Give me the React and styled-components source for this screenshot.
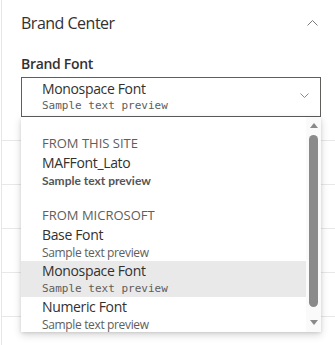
import React from "react";
import styled, { createGlobalStyle } from "styled-components";

const Global = createGlobalStyle`
  html, body { margin: 0; padding: 0; background: #ffffff; }
  body { font-family: "Segoe UI", "Open Sans", "Noto Sans", sans-serif; color: #323130; }
`;

const Panel = styled.div`
  position: relative;
  width: 334px;
  height: 345px;
  margin-left: 1px;
  border-left: 1px solid #e6e6e6;
  overflow: hidden;
  box-sizing: border-box;
`;

const TitleRow = styled.div`
  display: flex;
  align-items: center;
  justify-content: space-between;
  height: 44px;
  padding: 2px 17px 0 19px;
  box-sizing: border-box;
`;

const Title = styled.div`
  font-size: 16px;
  letter-spacing: -0.5px;
  color: #323130;
`;

const Section = styled.div`
  padding: 10px 14px 0 19px;
`;

const Label = styled.div`
  font-size: 14px;
  font-weight: 600;
  letter-spacing: -0.3px;
  color: #323130;
  line-height: 20px;
  margin-bottom: 3px;
`;

const Select = styled.div`
  display: flex;
  align-items: center;
  height: 40px;
  border: 1px solid #605e5c;
  box-sizing: border-box;
  padding: 0 11px 0 20px;

  svg {
    margin-bottom: 3px;
  }
`;

const SelectText = styled.div`
  flex: 1;
  display: flex;
  flex-direction: column;
  padding-bottom: 1px;
`;

const FontName = styled.div`
  font-size: 14px;
  letter-spacing: -0.35px;
  line-height: ${(p) => p.$lh || 18}px;
  color: #323130;
`;

const Preview = styled.div`
  font-size: ${(p) => (p.$kind === "mono" ? "11px" : "12px")};
  line-height: 16px;
  color: ${(p) => (p.$kind === "bold" ? "#555555" : "#605e5c")};
  font-weight: ${(p) => (p.$kind === "bold" ? 700 : 400)};
  letter-spacing: ${(p) => (p.$kind ? "0" : "-0.35px")};
  font-family: ${(p) =>
    p.$kind === "mono"
      ? '"DejaVu Sans Mono", "Liberation Mono", monospace'
      : p.$kind === "bold"
      ? 'Lato, "Open Sans", sans-serif'
      : '"Open Sans", "Noto Sans", sans-serif'};
`;

const BackRow = styled.div`
  height: ${(p) => p.$h || 44}px;
  border-bottom: 1px solid #e8e8e8;
  box-sizing: border-box;
`;

const Menu = styled.div`
  position: absolute;
  left: 19px;
  top: 117px;
  width: 300px;
  height: 215px;
  background: #ffffff;
  box-shadow: 0 3px 8px rgba(0, 0, 0, 0.16), 0 1px 3px rgba(0, 0, 0, 0.1);
  display: flex;
  overflow: hidden;
`;

const List = styled.div`
  flex: 1;
  padding-top: 17px;
`;

const GroupHeader = styled.div`
  font-size: 13px;
  line-height: 19px;
  color: #605e5c;
  padding-left: 21px;
  margin-top: ${(p) => p.$top || 0}px;
`;

const Option = styled.div`
  height: 36px;
  padding-left: 21px;
  box-sizing: border-box;
  display: flex;
  flex-direction: column;
  justify-content: space-between;
  background: ${(p) => (p.$selected ? "#e9e9e9" : "transparent")};
`;

const Scrollbar = styled.div`
  width: 15px;
  background: #fafafa;
  display: flex;
  flex-direction: column;
  align-items: center;
  padding: 6px 0 6px;
  box-sizing: border-box;
`;

const Arrow = styled.div`
  width: 0;
  height: 0;
  border-left: 4px solid transparent;
  border-right: 4px solid transparent;
  ${(p) =>
    p.$up
      ? "border-bottom: 5px solid #8a8a8a;"
      : "border-top: 5px solid #8a8a8a;"}
`;

const Thumb = styled.div`
  width: 9px;
  height: 172px;
  margin: 7px 0 13px;
  background: #8a8a8a;
  border-radius: 5px;
`;

const ChevronUp = () => (
  <svg width="11" height="6" viewBox="0 0 11 6">
    <path d="M0.5 5.5 L5.5 0.5 L10.5 5.5" fill="none" stroke="#7a7a7a" strokeWidth="1" />
  </svg>
);

const ChevronDown = () => (
  <svg width="9" height="5" viewBox="0 0 9 5">
    <path d="M0.5 0.5 L4.5 4.5 L8.5 0.5" fill="none" stroke="#8a8a8a" strokeWidth="1" />
  </svg>
);

export default function App() {
  return (
    <Panel>
      <Global />
      <TitleRow>
        <Title>Brand Center</Title>
        <ChevronUp />
      </TitleRow>
      <Section>
        <Label>Brand Font</Label>
        <Select>
          <SelectText>
            <FontName>Monospace Font</FontName>
            <Preview $kind="mono">Sample text preview</Preview>
          </SelectText>
          <ChevronDown />
        </Select>
      </Section>
      <div>
        <BackRow $h={24} />
        <BackRow />
        <BackRow />
        <BackRow />
        <BackRow />
        <BackRow />
      </div>
      <Menu>
        <List>
          <GroupHeader>FROM THIS SITE</GroupHeader>
          <Option>
            <FontName $lh={20}>MAFFont_Lato</FontName>
            <Preview $kind="bold">Sample text preview</Preview>
          </Option>
          <GroupHeader $top={17}>FROM MICROSOFT</GroupHeader>
          <Option>
            <FontName $lh={20}>Base Font</FontName>
            <Preview>Sample text preview</Preview>
          </Option>
          <Option $selected>
            <FontName $lh={20}>Monospace Font</FontName>
            <Preview $kind="mono">Sample text preview</Preview>
          </Option>
          <Option>
            <FontName $lh={20}>Numeric Font</FontName>
            <Preview>Sample text preview</Preview>
          </Option>
        </List>
        <Scrollbar>
          <Arrow $up />
          <Thumb />
          <Arrow />
        </Scrollbar>
      </Menu>
    </Panel>
  );
}
